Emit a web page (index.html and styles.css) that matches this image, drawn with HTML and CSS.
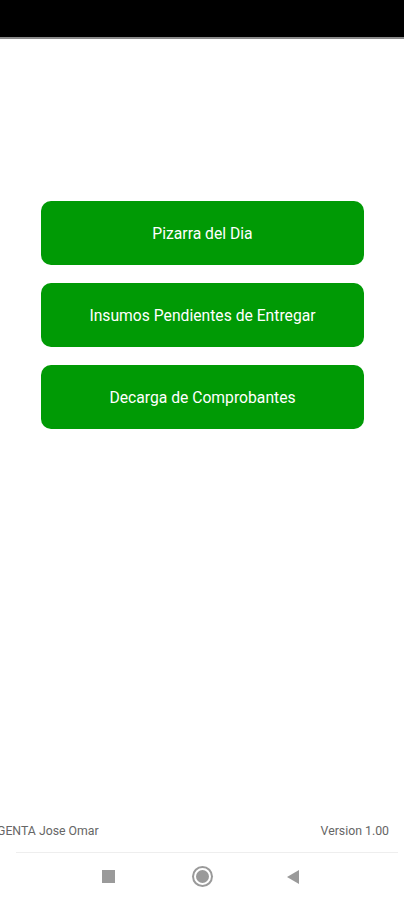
FILE: index.html
```html
<!DOCTYPE html>
<html lang="es">
<head>
	<meta charset="UTF-8">
	<title>Menu</title>
	<link rel="stylesheet" href="styles.css">
</head>
<body>
<div class="screen">
	<div class="status"></div>
	<main class="menu">
		<button type="button" class="menu-btn">Pizarra del Dia</button>
		<button type="button" class="menu-btn">Insumos Pendientes de Entregar</button>
		<button type="button" class="menu-btn">Decarga de Comprobantes</button>
	</main>
	<footer class="footer">
		<span>GENTA Jose Omar</span>
		<span>Version 1.00</span>
	</footer>
	<nav class="navbar">
		<span class="nav-square"></span>
		<span class="nav-circle"></span>
		<svg class="nav-back" width="13" height="14" viewBox="0 0 13 14">
			<polygon points="12,0 12,14 0,7" fill="#9a9a9a"/>
		</svg>
	</nav>
</div>
</body>
</html>
```

FILE: styles.css
```css
html, body{
	margin: 0;
	padding: 0;
	background: #fff;
}

.screen{
	width: 404px;
	height: 900px;
	display: flex;
	flex-direction: column;
	font-family: Roboto, "Liberation Sans", sans-serif;
}

.status{
	height: 37px;
	background: #000;
	border-bottom: 2px solid #8a8a8a;
}

.menu{
	display: flex;
	flex-direction: column;
	gap: 18px;
	padding: 162px 40px 0 41px;
	flex: 1;
}

.menu-btn{
	height: 64px;
	border: none;
	border-radius: 10px;
	background: #009a05;
	color: #fff;
	font-family: Roboto, "Liberation Sans", sans-serif;
	font-size: 15.7px;
	padding: 0;
}

.footer{
	display: flex;
	justify-content: space-between;
	padding: 0 15px 0 0;
	margin-left: -3px;
	font-size: 12.3px;
	color: #666;
	height: 28px;
	align-items: flex-start;
}

.navbar{
	border-top: 1px solid #eee;
	margin: 0 6px 0 16px;
	height: 47px;
	display: flex;
	align-items: center;
	justify-content: space-between;
	padding: 0 98px 0 86px;
}

.nav-square{
	width: 13px;
	height: 13px;
	background: #9a9a9a;
}

.nav-circle{
	width: 13px;
	height: 13px;
	margin-left: 3px;
	border-radius: 50%;
	background: #9a9a9a;
	border: 2px solid #fff;
	box-shadow: 0 0 0 2px #9a9a9a;
}
```
